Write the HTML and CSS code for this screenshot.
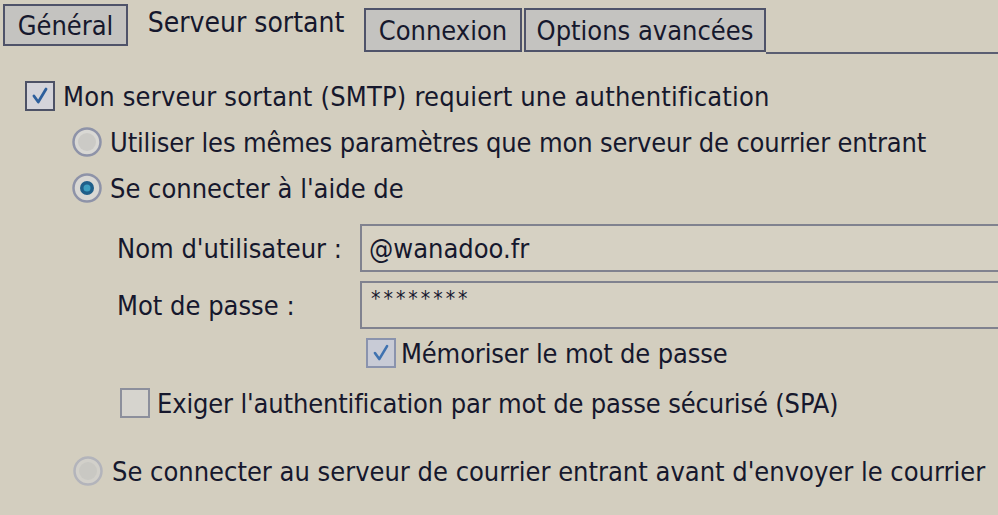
FILE: index.html
```html
<!DOCTYPE html>
<html lang="fr">
<head>
<meta charset="utf-8">
<title>Paramètres de messagerie Internet</title>
<link rel="stylesheet" href="styles.css">
</head>
<body>
<div class="dialog">
  <div class="tabs">
    <div class="tab tab-general">Général</div>
    <div class="tab tab-active">Serveur sortant</div>
    <div class="tab tab-conn">Connexion</div>
    <div class="tab tab-opt">Options avancées</div>
    <div class="tab-fill"></div>
  </div>

  <div class="panel">
    <div class="row row-auth">
      <span class="check checked"><svg viewBox="0 0 30 30"><path d="M8 15 L13 22 L22 7" fill="none" stroke="#2d5f9c" stroke-width="3.2" stroke-linecap="round" stroke-linejoin="round"/></svg></span>
      <span class="label label-auth">Mon serveur sortant (SMTP) requiert une authentification</span>
    </div>

    <div class="row row-radio1">
      <span class="radio"><svg viewBox="0 0 32 32"><circle cx="16" cy="16" r="13.5" fill="#d9d8d4" stroke="#8e93a8" stroke-width="2.5"/><circle cx="16" cy="16" r="9" fill="#cbcac6"/></svg></span>
      <span class="label label-tight">Utiliser les mêmes paramètres que mon serveur de courrier entrant</span>
    </div>

    <div class="row row-radio2">
      <span class="radio"><svg viewBox="0 0 32 32"><circle cx="16" cy="16" r="13.5" fill="#d9d8d4" stroke="#8e93a8" stroke-width="2.5"/><circle cx="16" cy="16" r="7" fill="#1f5f8a"/><circle cx="16" cy="16" r="3.5" fill="#3d9ec0"/></svg></span>
      <span class="label">Se connecter à l'aide de</span>
    </div>

    <div class="field field-user">
      <span class="field-label">Nom d'utilisateur :</span>
      <div class="input">@wanadoo.fr</div>
    </div>

    <div class="field field-pass">
      <span class="field-label">Mot de passe :</span>
      <div class="input input-pass">********</div>
    </div>

    <div class="row row-remember">
      <span class="check checked light"><svg viewBox="0 0 30 30"><path d="M8 15 L13 22 L22 7" fill="none" stroke="#3f72b0" stroke-width="3" stroke-linecap="round" stroke-linejoin="round"/></svg></span>
      <span class="label label-tight">Mémoriser le mot de passe</span>
    </div>

    <div class="row row-spa">
      <span class="check empty"></span>
      <span class="label label-tight">Exiger l'authentification par mot de passe sécurisé (SPA)</span>
    </div>

    <div class="row row-radio3">
      <span class="radio"><svg viewBox="0 0 32 32"><circle cx="16" cy="16" r="13.5" fill="#d2d0ca" stroke="#b3b4bb" stroke-width="2.5"/><circle cx="16" cy="16" r="9" fill="#c9c8c3"/></svg></span>
      <span class="label">Se connecter au serveur de courrier entrant avant d'envoyer le courrier</span>
    </div>
  </div>
</div>
</body>
</html>
```

FILE: styles.css
```css
* {
  box-sizing: border-box;
}

html, body {
  margin: 0;
  padding: 0;
}

body {
  width: 998px;
  height: 515px;
  overflow: hidden;
  background: #d3cebf;
  font-family: "DejaVu Sans Condensed", "DejaVu Sans", sans-serif;
  font-size: 27px;
  color: #16182d;
}

.dialog {
  display: flex;
  flex-direction: column;
}

.tabs {
  display: flex;
  align-items: flex-end;
  height: 54px;
}

.tab {
  display: flex;
  align-items: center;
  justify-content: center;
  height: 44px;
  border: 2px solid #4f5369;
  background: #c4c3c0;
  font-size: 27px;
  white-space: nowrap;
  margin-bottom: 2px;
}

.tab-general {
  margin-left: 3px;
  width: 125px;
  height: 42px;
  margin-bottom: 8px;
}

.tab-active {
  width: 236px;
  height: 50px;
  border: none;
  background: transparent;
  align-items: flex-start;
  padding-top: 4px;
  font-size: 28px;
}

.tab-conn {
  width: 158px;
}

.tab-opt {
  width: 242px;
  margin-left: 2px;
}

.tab-fill {
  flex: 1;
  height: 2px;
  background: #5a5e72;
}

.panel {
  display: flex;
  flex-direction: column;
}

.row {
  display: flex;
  align-items: center;
  height: 32px;
  white-space: nowrap;
}

.label-auth {
  letter-spacing: 0.2px;
}

.label-tight {
  letter-spacing: -0.15px;
}

.check {
  flex: none;
  width: 30px;
  height: 30px;
  border: 2px solid #4d5266;
  background: #d4d4da;
  display: flex;
  align-items: center;
  justify-content: center;
}

.check svg {
  width: 26px;
  height: 26px;
}

.check.light {
  border-color: #8a93ad;
  background: #c8cbd6;
}

.check.empty {
  border-color: #8c8f9c;
  background: #d6d4ce;
}

.radio {
  flex: none;
  width: 32px;
  height: 32px;
  display: flex;
}

.radio svg {
  width: 32px;
  height: 32px;
}

.row-auth {
  margin-top: 26px;
  padding-left: 25px;
  gap: 8px;
}

.row-radio1 {
  margin-top: 14px;
  padding-left: 71px;
  gap: 7px;
}

.row-radio2 {
  margin-top: 14px;
  padding-left: 71px;
  gap: 7px;
}

.field {
  display: flex;
  align-items: stretch;
  height: 48px;
}

.field-user {
  margin-top: 20px;
}

.field-pass {
  margin-top: 9px;
}

.field-label {
  width: 360px;
  padding-left: 117px;
  display: flex;
  align-items: center;
  white-space: nowrap;
}

.input {
  flex: 1;
  border: 2px solid #80828f;
  border-right: none;
  background: #d6d1c3;
  display: flex;
  align-items: center;
  padding-left: 7px;
  font-size: 27px;
}

.input-pass {
  font-size: 21px;
  align-items: flex-start;
  padding-top: 4px;
  padding-left: 9px;
  letter-spacing: 3px;
}

.row-remember {
  margin-top: 8px;
  padding-left: 366px;
  gap: 5px;
}

.row-spa {
  margin-top: 18px;
  padding-left: 120px;
  gap: 7px;
}

.row-radio3 {
  margin-top: 36px;
  padding-left: 72px;
  gap: 8px;
}
```
